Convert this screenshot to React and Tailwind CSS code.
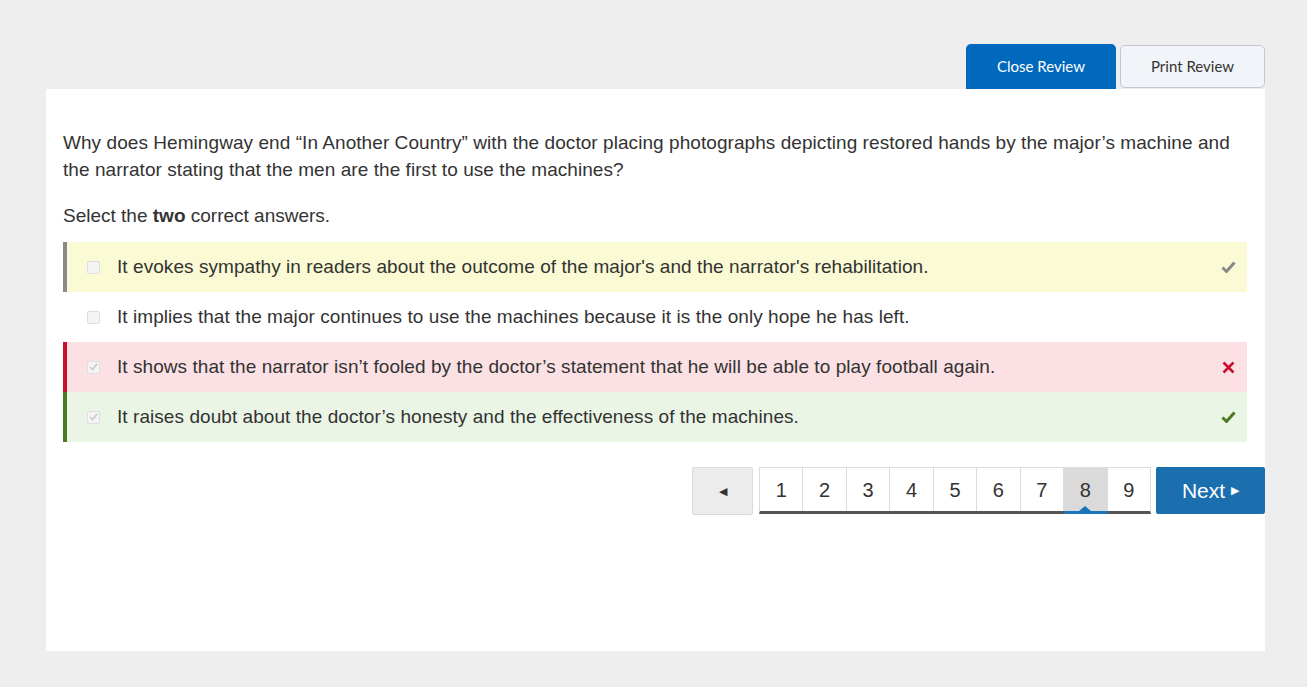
import React from 'react';

const options = [
  {
    text: "It evokes sympathy in readers about the outcome of the major's and the narrator's rehabilitation.",
    row: 'bg-[#fafad4] border-[#8a8a8a]',
    checked: false,
    mark: 'check-gray',
  },
  {
    text: 'It implies that the major continues to use the machines because it is the only hope he has left.',
    row: 'bg-white border-white',
    checked: false,
    mark: null,
  },
  {
    text: 'It shows that the narrator isn’t fooled by the doctor’s statement that he will be able to play football again.',
    row: 'bg-[#fbe1e3] border-[#c8102e]',
    checked: true,
    mark: 'x',
  },
  {
    text: 'It raises doubt about the doctor’s honesty and the effectiveness of the machines.',
    row: 'bg-[#ebf5e6] border-[#4b7a1f]',
    checked: true,
    mark: 'check-green',
  },
];

const Check = ({ color }) => (
  <svg width="15" height="12" viewBox="0 0 15 12">
    <path d="M1.5 6.5 L5.5 10.5 L13.5 1.5" fill="none" stroke={color} strokeWidth="3" />
  </svg>
);

const Cross = () => (
  <svg width="13" height="13" viewBox="0 0 13 13">
    <path d="M1.5 1.5 L11.5 11.5 M11.5 1.5 L1.5 11.5" fill="none" stroke="#c8102e" strokeWidth="2.6" />
  </svg>
);

const Box = ({ checked }) => (
  <span className="w-[13px] h-[13px] rounded-[2px] border border-[#dedede] bg-[#f4f4f4] flex items-center justify-center">
    {checked && (
      <svg width="9" height="8" viewBox="0 0 9 8">
        <path d="M1 4 L3.5 6.5 L8 1" fill="none" stroke="#c9c9c9" strokeWidth="1.6" />
      </svg>
    )}
  </span>
);

const Option = ({ opt }) => (
  <div className={`flex items-center h-[50px] border-l-4 ${opt.row}`}>
    <div className="w-[50px] flex justify-center pl-[2px]">
      <Box checked={opt.checked} />
    </div>
    <div className="flex-1 text-[19px] tracking-[0.06px] text-[#333]">{opt.text}</div>
    <div className="w-[40px] flex justify-center pl-[2px]">
      {opt.mark === 'check-gray' && <Check color="#888" />}
      {opt.mark === 'check-green' && <Check color="#4b7a1f" />}
      {opt.mark === 'x' && <Cross />}
    </div>
  </div>
);

const Pager = () => {
  const pages = [1, 2, 3, 4, 5, 6, 7, 8, 9];
  return (
    <div className="flex justify-end items-start mt-[25px] mr-[-18px]">
      <button className="w-[61px] h-[48px] bg-[#ececec] border border-[#dcdcdc] rounded-[2px] flex items-center justify-center text-[#333] text-[11px]">
        ◀
      </button>
      <div className="ml-[6px] flex w-[392px] border border-[#dcdcdc] border-b-[3px] border-b-[#555] h-[47px]">
        {pages.map((p) => (
          <div
            key={p}
            className={`relative flex-1 flex items-center justify-center text-[20px] text-[#333] ${
              p !== 9 ? 'border-r border-[#dcdcdc]' : ''
            } ${p === 8 ? 'bg-[#dadada]' : 'bg-white'}`}
          >
            {p}
            {p === 8 && (
              <>
                <span className="absolute left-0 right-0 bottom-[-3px] h-[3px] bg-[#1b75bb]" />
                <span className="absolute left-1/2 -translate-x-1/2 bottom-0 w-0 h-0 border-l-[6px] border-r-[6px] border-b-[5px] border-l-transparent border-r-transparent border-b-[#1b75bb]" />
              </>
            )}
          </div>
        ))}
      </div>
      <button className="ml-[5px] w-[109px] h-[47px] bg-[#1b6fae] rounded-[2px] text-white text-[21px] flex items-center justify-center gap-[6px]">
        Next <span className="text-[11px]">▶</span>
      </button>
    </div>
  );
};

const App = () => {
  return (
    <div className="w-[1307px] h-[687px] bg-[#eeeeee] pt-[44px] pl-[46px] font-['Liberation_Sans',Arial,sans-serif]">
      <div className="w-[1219px]">
        <div className="flex justify-end gap-[4px] h-[45px] font-['Lato',sans-serif] text-[15px]">
          <button className="w-[150px] h-[45px] bg-[#0068bd] text-white rounded-t-[5px] rounded-b-[0px]">
            Close Review
          </button>
          <button className="w-[145px] h-[43px] mt-[1px] bg-[#f1f4f8] text-[#333] border border-[#c4c8cc] rounded-[5px]">
            Print Review
          </button>
        </div>
        <div className="bg-white h-[562px] pt-[40px] pl-[17px] pr-[18px]">
          <p className="text-[19px] tracking-[0.06px] leading-[27px] text-[#333]">
            Why does Hemingway end “In Another Country” with the doctor placing photographs depicting restored hands by the major’s machine and the narrator stating that the men are the first to use the machines?
          </p>
          <p className="text-[19px] leading-[27px] text-[#333] mt-[19px]">
            Select the <b>two</b> correct answers.
          </p>
          <div className="mt-[13px]">
            {options.map((o, i) => (
              <Option key={i} opt={o} />
            ))}
          </div>
          <Pager />
        </div>
      </div>
    </div>
  );
};

export default App;
